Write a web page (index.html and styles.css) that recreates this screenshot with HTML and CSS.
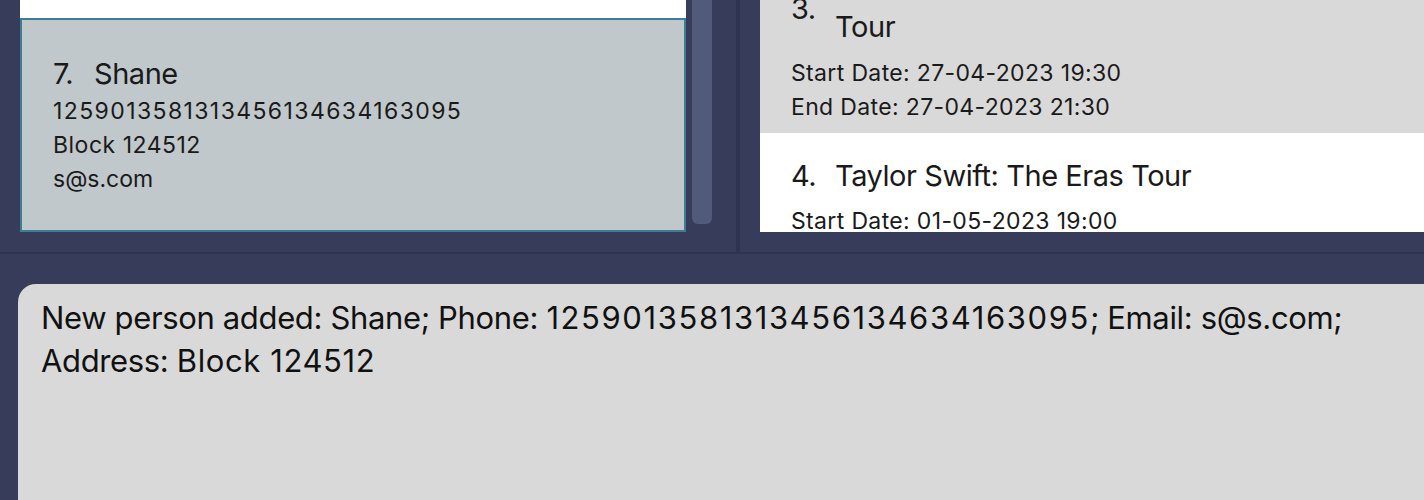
FILE: index.html
```html
<!DOCTYPE html>
<html lang="en">
<head>
<meta charset="utf-8">
<title>Address book</title>
<link rel="stylesheet" href="styles.css">
</head>
<body>
<div class="app">
  <div class="top">
    <section class="pane pane-left">
      <div class="list person-list">
        <div class="card person-card tail"></div>
        <div class="card person-card selected">
          <div class="title-row">
            <span class="index">7.</span>
            <span class="name">Shane</span>
          </div>
          <div class="detail phone">1259013581313456134634163095</div>
          <div class="detail address">Block 124512</div>
          <div class="detail email">s@s.com</div>
        </div>
      </div>
      <div class="scrollbar"><div class="thumb"></div></div>
    </section>
    <div class="vdivider"></div>
    <section class="pane pane-right">
      <div class="list event-list">
        <div class="card event-card odd scrolled">
          <div class="title-row event-title">
            <span class="index">3.</span>
            <span class="name">Taylor Swift: The Eras<br>Tour</span>
          </div>
          <div class="detail date">Start Date: 27-04-2023 19:30</div>
          <div class="detail date">End Date: 27-04-2023 21:30</div>
        </div>
        <div class="card event-card even">
          <div class="title-row event-title">
            <span class="index">4.</span>
            <span class="name">Taylor Swift: The Eras Tour</span>
          </div>
          <div class="detail date">Start Date: 01-05-2023 19:00</div>
          <div class="detail date">End Date: 01-05-2023 22:00</div>
        </div>
      </div>
    </section>
  </div>
  <div class="result">
    <p class="result-text">New person added: Shane; Phone: <span class="r-phone">1259013581313456134634163095</span>; Email: s@s.com; Address: <span class="r-address">Block 124512</span></p>
  </div>
</div>
</body>
</html>
```

FILE: styles.css
```css
html, body {
  margin: 0;
  padding: 0;
}

body {
  background: #363c59;
  font-family: Inter, "Noto Sans", sans-serif;
  color: #1a1a1a;
  width: 1424px;
  height: 500px;
  overflow: hidden;
}

.app {
  display: flex;
  flex-direction: column;
  height: 500px;
}

.top {
  display: flex;
  height: 252px;
  border-bottom: 2px solid #2d3350;
  flex: none;
}

.pane {
  display: flex;
  height: 252px;
}

.pane-left {
  width: 716px;
  padding-left: 20px;
}

.person-list {
  width: 666px;
  height: 232px;
  overflow: hidden;
  display: flex;
  flex-direction: column;
}

.card {
  box-sizing: border-box;
  flex: none;
}

.tail {
  height: 18px;
  background: #ffffff;
}

.person-card.selected {
  height: 214px;
  background: #c0c8cb;
  border: 2px solid #3e7d92;
  padding: 36px 0 0 31px;
}

.title-row {
  display: flex;
  align-items: center;
  font-size: 29px;
  line-height: 36px;
  letter-spacing: -0.45px;
  color: #1a1a1a;
}

.title-row .index {
  width: 41px;
  flex: none;
}

.detail {
  font-size: 23px;
  line-height: 34px;
  color: #1a1a1a;
}

.detail.phone {
  letter-spacing: 1.4px;
}

.detail.address {
  letter-spacing: 0.5px;
}

.detail.date {
  letter-spacing: 0.35px;
}

.person-card .title-row {
  margin-bottom: 2px;
}

.scrollbar {
  width: 20px;
  margin-left: 6px;
  height: 252px;
}

.thumb {
  height: 224px;
  background: #515a7a;
  border-radius: 0 0 6px 6px;
}

.vdivider {
  width: 4px;
  height: 252px;
  background: #2d3350;
  flex: none;
}

.pane-right {
  width: 664px;
  padding-left: 20px;
}

.event-list {
  width: 664px;
  height: 232px;
  overflow: hidden;
  display: flex;
  flex-direction: column;
}

.event-card {
  padding: 25px 0 0 31px;
}

.event-card.odd {
  background: #d9d9d9;
}

.event-card.even {
  background: #ffffff;
}

.event-card.scrolled {
  margin-top: -64px;
  height: 197px;
}

.event-card.scrolled .name {
  line-height: 44px;
}

.event-card.scrolled .index {
  margin-top: 8px;
}

.event-title {
  margin-bottom: 10px;
}

.event-card.scrolled .event-title {
  margin-bottom: 7px;
}

.event-title .index {
  width: 44px;
}

.result {
  margin: 30px 0 0 18px;
  flex: 1;
  background: #d9d9d9;
  border-radius: 18px 0 0 0;
  padding: 12px 0 0 23px;
}

.result-text {
  margin: 0;
  width: 1340px;
  font-size: 31px;
  line-height: 43px;
  letter-spacing: -0.35px;
  color: #111111;
}

.r-phone {
  letter-spacing: 1.6px;
}

.r-address {
  letter-spacing: 0.6px;
}
```
